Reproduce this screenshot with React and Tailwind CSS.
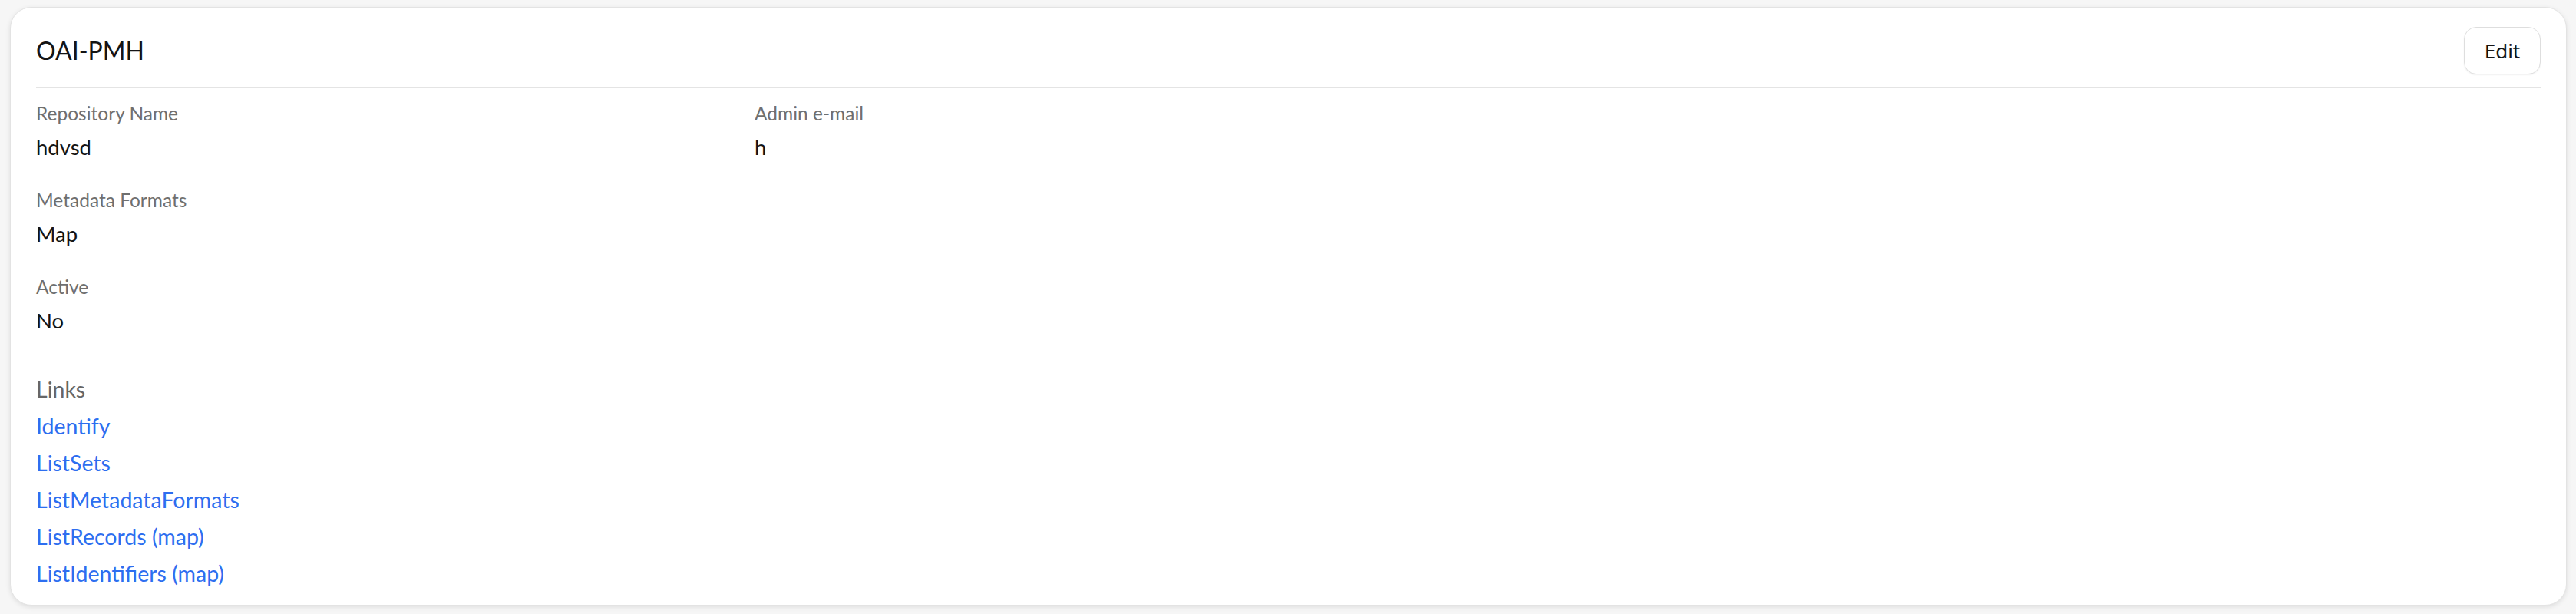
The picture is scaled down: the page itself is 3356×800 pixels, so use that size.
import React from "react";

function Field({ label, value }) {
  return (
    <div className="flex flex-col">
      <div className="text-[24.5px] leading-[34px] text-[#6f6f6f]">{label}</div>
      <div className="mt-[7px] text-[27.5px] leading-[40px] text-[#141414]">{value}</div>
    </div>
  );
}

const links = [
  "Identify",
  "ListSets",
  "ListMetadataFormats",
  "ListRecords (map)",
  "ListIdentifiers (map)",
];

export default function App() {
  return (
    <div
      className="min-h-[800px] bg-[#f6f6f6] pt-[9px] pl-[13px] pr-[12px] pb-[12px]"
      style={{ fontFamily: "Lato, 'Noto Sans', sans-serif" }}
    >
      <div className="rounded-[28px] border border-[#e3e3e3] bg-white px-[33px] pt-[25px] pb-[17px] shadow-[0_2px_6px_rgba(0,0,0,0.10)]">
        <div className="flex items-center justify-between border-b-2 border-[#e4e4e4] pb-[16px]">
          <h1 className="text-[32px] leading-[40px] font-normal text-[#141414]">OAI-PMH</h1>
          <button
            className="flex h-[62px] w-[100px] items-center justify-center rounded-[16px] border-[1.5px] border-[#dedede] bg-white text-[26px] leading-[36px] text-[#141414] shadow-[0_1px_2px_rgba(0,0,0,0.06)]"
            style={{ fontFamily: "'Noto Sans', 'Open Sans', sans-serif" }}
          >
            Edit
          </button>
        </div>
        <div className="grid grid-cols-[936px_1fr] gap-y-[32px] pt-[16px]">
          <Field label="Repository Name" value="hdvsd" />
          <Field label="Admin e-mail" value="h" />
          <Field label="Metadata Formats" value="Map" />
          <div />
          <Field label="Active" value="No" />
          <div />
        </div>
        <div className="mt-[45px] flex flex-col">
          <div className="text-[28.5px] leading-[48px] text-[#666666]">Links</div>
          {links.map((l) => (
            <a key={l} href="#" className="w-fit text-[28.5px] leading-[48px] text-[#2d6ef0]">
              {l}
            </a>
          ))}
        </div>
      </div>
    </div>
  );
}
